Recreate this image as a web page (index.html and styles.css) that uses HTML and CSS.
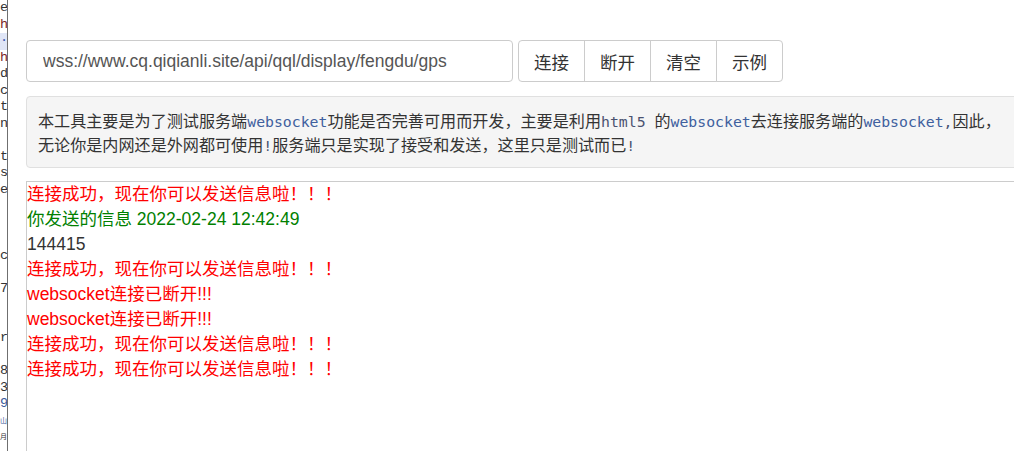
FILE: index.html
```html
<!DOCTYPE html>
<html lang="zh-CN">
<head>
<meta charset="utf-8">
<title>WebSocket 测试工具</title>
<link rel="stylesheet" href="styles.css">
</head>
<body>
<div class="strip">
  <div class="sl">e</div>
  <div class="sl red">h</div>
  <div class="sl hl">·</div>
  <div class="sl red">h</div>
  <div class="sl">d</div>
  <div class="sl">c</div>
  <div class="sl">t</div>
  <div class="sl">n</div>
  <div class="sl"></div>
  <div class="sl">t</div>
  <div class="sl">s</div>
  <div class="sl">e</div>
  <div class="sl"></div>
  <div class="sl"></div>
  <div class="sl"></div>
  <div class="sl">c</div>
  <div class="sl"></div>
  <div class="sl">7</div>
  <div class="sl"></div>
  <div class="sl"></div>
  <div class="sl">r</div>
  <div class="sl"></div>
  <div class="sl">8</div>
  <div class="sl">3</div>
  <div class="sl blue">9</div>
  <div class="sl blue cjk">山</div>
  <div class="sl cjk">月</div>
</div>
<div class="main">
  <div class="toolbar">
    <input class="url" type="text" value="wss://www.cq.qiqianli.site/api/qql/display/fengdu/gps">
    <div class="btn-group">
      <button class="btn">连接</button>
      <button class="btn">断开</button>
      <button class="btn">清空</button>
      <button class="btn">示例</button>
    </div>
  </div>
  <div class="well">
    <p class="desc">本工具主要是为了测试服务端<span class="code">websocket</span>功能是否完善可用而开发，主要是利用<span class="code dim">html5 </span>的<span class="code">websocket</span>去连接服务端的<span class="code">websocket</span><span class="code dim">,</span>因此，</p>
    <p class="desc">无论你是内网还是外网都可使用<span class="code dim">!</span>服务端只是实现了接受和发送，这里只是测试而已<span class="code dim">!</span></p>
  </div>
  <div class="output">
    <div class="msg err">连接成功，现在你可以发送信息啦！！！</div>
    <div class="msg sent">你发送的信息 2022-02-24 12:42:49</div>
    <div class="msg plain">144415</div>
    <div class="msg err">连接成功，现在你可以发送信息啦！！！</div>
    <div class="msg err">websocket连接已断开!!!</div>
    <div class="msg err">websocket连接已断开!!!</div>
    <div class="msg err">连接成功，现在你可以发送信息啦！！！</div>
    <div class="msg err">连接成功，现在你可以发送信息啦！！！</div>
  </div>
</div>
</body>
</html>
```

FILE: styles.css
```css
html, body {
  margin: 0;
  padding: 0;
  background: #fff;
  overflow: hidden;
}

body {
  display: flex;
  height: 451px;
  font-family: "Liberation Sans", "Noto Sans CJK SC", sans-serif;
  color: #333;
}

.strip {
  flex: 0 0 7px;
  border-right: 1px solid #6f6f6f;
  overflow: hidden;
  font-family: "Liberation Mono", "Noto Sans CJK SC", monospace;
  font-size: 13.5px;
  color: #333;
}

.sl {
  height: 16.5px;
  line-height: 16.5px;
  white-space: nowrap;
}

.sl.cjk { font-size: 7px; }
.sl.red { color: #7a1f1f; }
.sl.blue { color: #3a5a9a; }
.sl.hl { background: #dfe5f6; color: #3a5ab0; }

.main {
  flex: 0 0 1100px;
  padding: 40px 0 0 18px;
  display: flex;
  flex-direction: column;
}

.toolbar {
  display: flex;
  gap: 5px;
  height: 42px;
}

.url {
  box-sizing: border-box;
  width: 487px;
  height: 42px;
  margin: 0;
  padding: 0 0 0 16px;
  border: 1px solid #ccc;
  border-radius: 4px;
  font-family: "Liberation Sans", sans-serif;
  font-size: 17.5px;
  color: #555;
  outline: none;
}

.btn-group {
  display: flex;
}

.btn {
  box-sizing: border-box;
  width: 67px;
  height: 42px;
  margin: 0 0 0 -1px;
  padding: 0;
  background: #fff;
  border: 1px solid #ccc;
  border-radius: 0;
  font-family: "Noto Sans CJK SC", sans-serif;
  font-size: 17.5px;
  color: #333;
}

.btn:first-child {
  margin-left: 0;
  border-radius: 4px 0 0 4px;
}

.btn:last-child {
  border-radius: 0 4px 4px 0;
}

.well {
  margin-top: 14px;
  box-sizing: border-box;
  height: 72px;
  padding: 12px 11px;
  background: #f5f5f5;
  border: 1px solid #e0e0e0;
  border-radius: 4px;
}

.desc {
  margin: 0;
  font-family: "Noto Sans CJK SC", sans-serif;
  font-size: 16.1px;
  line-height: 23px;
  color: #333;
  white-space: nowrap;
}

.code {
  font-family: "DejaVu Sans Mono", monospace;
  font-size: 14.8px;
  color: #40609e;
}

.code.dim {
  color: #4a5270;
}

.output {
  margin-top: 13px;
  flex: 1;
  border-top: 1px solid #ccc;
  border-left: 1px solid #ccc;
}

.msg {
  font-family: "Liberation Sans", "Noto Sans CJK SC", sans-serif;
  font-size: 17.5px;
  line-height: 1.42857;
  white-space: nowrap;
}

.msg.err { color: #ff0000; }
.msg.sent { color: #008000; }
.msg.plain { color: #333; }
```
